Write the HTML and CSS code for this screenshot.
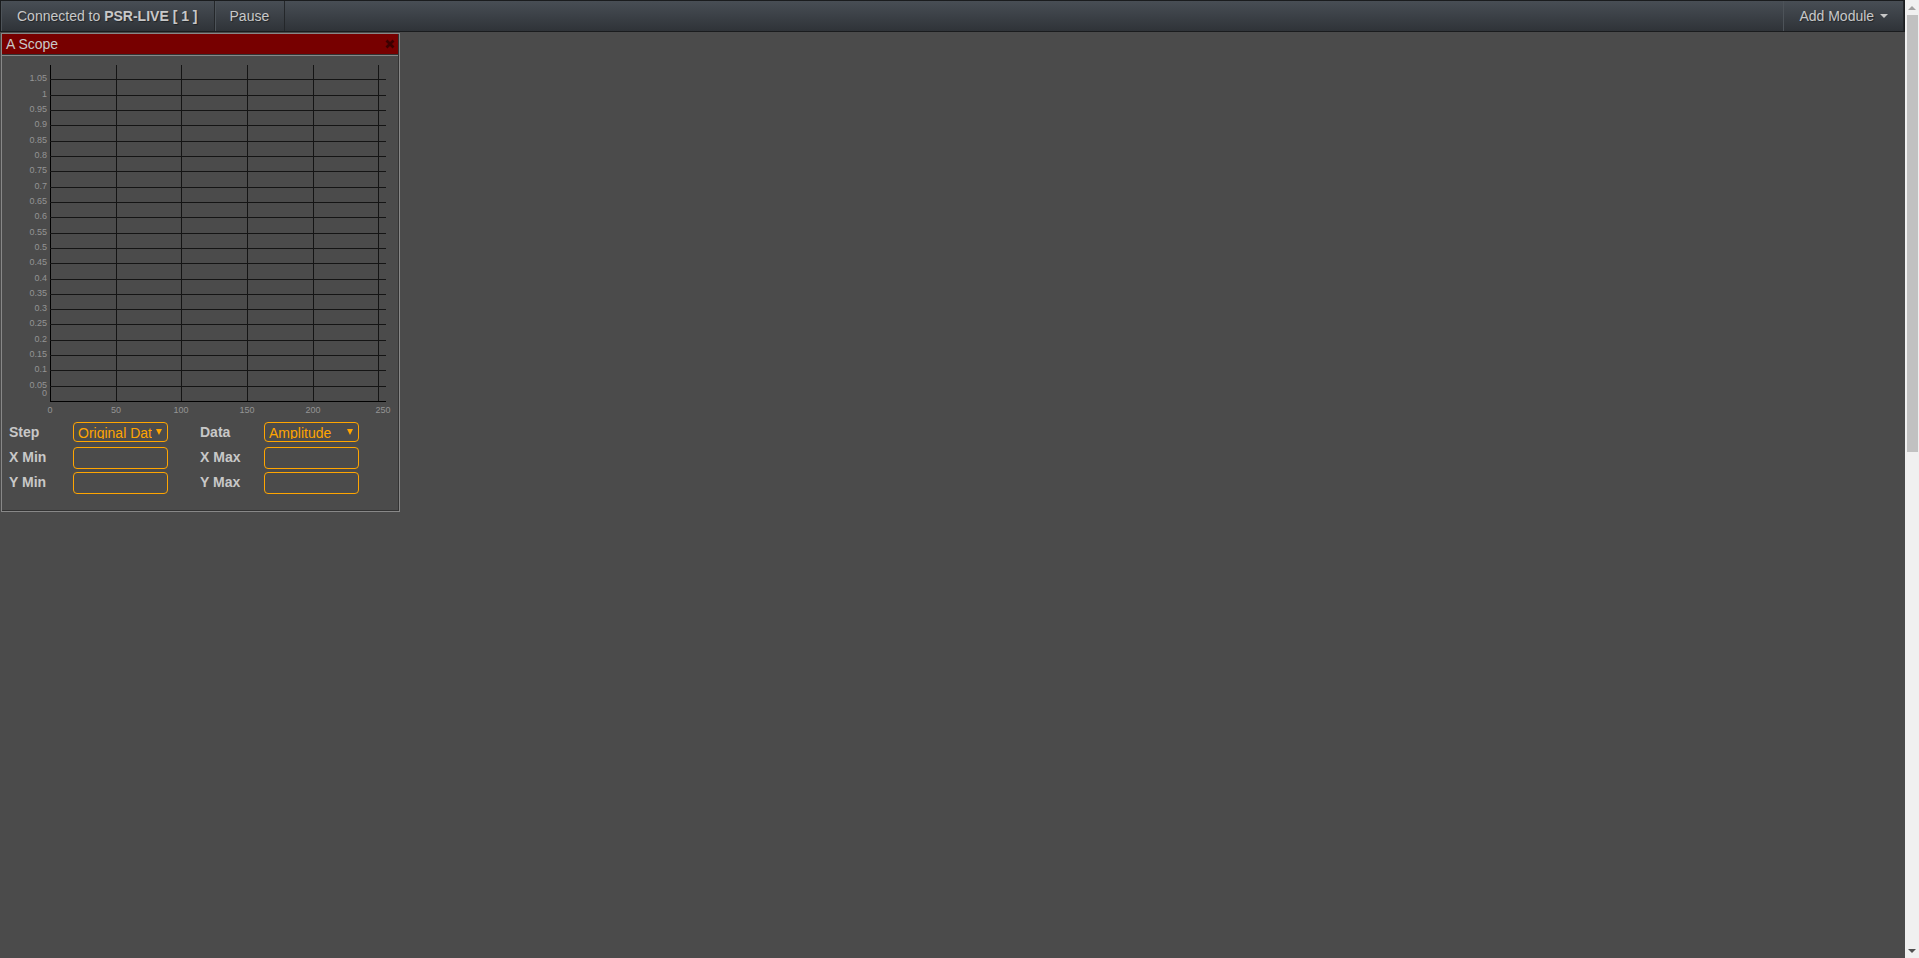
FILE: index.html
```html
<!DOCTYPE html>
<html lang="en">
<head>
  <meta charset="UTF-8">
  <meta name="viewport" content="width=device-width, initial-scale=1.0">
  <title>PSR-LIVE</title>
  <link rel="stylesheet" href="styles.css">
</head>
<body>
  <div class="page">
    <nav class="navbar">
      <a class="nav-item brand" href="#">Connected to <b>PSR-LIVE [ 1 ]</b></a>
      <button class="nav-item" id="pause" type="button">Pause</button>
      <button class="nav-item nav-right" type="button">Add Module <span class="caret"></span></button>
    </nav>

    <main class="modules">
      <section class="module">
        <header class="module-title">
          <h2>A Scope</h2>
          <button class="close" type="button" aria-label="Close">
            <svg width="10" height="10" viewBox="0 0 10 10"><path d="M1.5 1.5 L8.5 8.5 M8.5 1.5 L1.5 8.5" stroke="#3c0000" stroke-width="2.8"/></svg>
          </button>
        </header>
        <svg class="plot" id="plot" width="396" height="364" viewBox="0 0 396 364" shape-rendering="crispEdges"></svg>
        <form class="settings">
          <label for="step">Step</label>
          <div class="select"><select id="step"><option>Original Data</option></select></div>
          <label for="data">Data</label>
          <div class="select"><select id="data"><option>Amplitude</option></select></div>
          <label for="xmin">X Min</label>
          <input type="text" id="xmin">
          <label for="xmax">X Max</label>
          <input type="text" id="xmax">
          <label for="ymin">Y Min</label>
          <input type="text" id="ymin">
          <label for="ymax">Y Max</label>
          <input type="text" id="ymax">
        </form>
      </section>
    </main>
  </div>

  <div class="scrollbar" aria-hidden="true">
    <span class="arrow up"></span>
    <div class="track"><div class="thumb"></div></div>
    <span class="arrow down"></span>
  </div>

  <script>
    const plot = document.getElementById('plot');
    const left = 48, top_ = 9, right = 383, bottom = 345;
    const xMax = 255, yMax = 1.0973;

    function add(name, attrs, text) {
      const el = document.createElementNS('http://www.w3.org/2000/svg', name);
      for (const key in attrs) el.setAttribute(key, attrs[key]);
      if (text !== undefined) el.textContent = text;
      plot.appendChild(el);
    }

    // vertical grid lines and x labels
    for (let x = 0; x <= 250; x += 50) {
      const px = left + Math.round(x / xMax * (right - left));
      add('rect', { class: x ? 'grid' : 'axis', x: px, y: top_, width: 1, height: bottom - top_ + 1 });
      add('text', { class: 'tick', x: x === 250 ? px + 5 : px, y: bottom + 12, 'text-anchor': 'middle' }, x);
    }

    // horizontal grid lines and y labels
    for (let i = 0; i <= 21; i++) {
      const py = Math.round(bottom - i * 0.05 / yMax * (bottom - top_));
      add('rect', { class: i ? 'grid' : 'axis', x: left, y: py, width: right - left + 1, height: 1 });
      add('text', { class: 'tick', x: left - 3, y: i ? py + 2 : py - 5, 'text-anchor': 'end' }, +(i * 0.05).toFixed(2));
    }
  </script>
</body>
</html>
```
FILE: styles.css
```css
* { box-sizing: border-box; }
body { margin: 0; display: flex; min-height: 100vh; background: #4b4b4b; color: #c8c8c8; font: 14px/20px "Liberation Sans", Arial, sans-serif; }
.page { flex: 1; min-width: 0; }

.navbar { display: flex; height: 32px; border: 1px solid #1a1c1e; background: linear-gradient(#484e55, #2f3338); }
.nav-item { display: flex; align-items: center; padding: 0 15px 0 14px; border: 0; border-left: 1px solid #4d5359; border-right: 1px solid #24272a; background: none; color: #c8c8c8; font: inherit; text-decoration: none; text-shadow: 1px 1px 1px rgba(0,0,0,0.4); white-space: pre; }
.brand { padding: 0 16px 0 15px; }
.nav-right { margin-left: auto; padding-left: 15px; }
.caret { margin-left: 2px; border: 4px solid transparent; border-top-color: #c8c8c8; border-bottom: 0; }

.modules { padding: 1px; }
.module { width: 399px; max-width: 100%; border: 1px solid #888; box-shadow: inset -1px -1px #333; }
.module-title { display: flex; align-items: center; justify-content: space-between; height: 22px; margin-right: 1px; padding: 0 3px 2px 4px; background: #770000; border-bottom: 1px solid #888; box-shadow: inset 0 -1px #333; }
.module-title h2 { margin: 0; font-size: 14px; line-height: 20px; font-weight: normal; }
.close { display: flex; padding: 0; border: 0; background: none; }

.plot { display: block; max-width: 100%; }
.grid { fill: #141414; }
.axis { fill: #000; }
.tick { fill: #949494; font: 9px "Liberation Sans", Arial, sans-serif; }

.settings { display: grid; grid-template-columns: 64px 95px 32px 64px 95px; padding: 2px 7px 17px; row-gap: 3px; }
.settings label { height: 22px; font-weight: bold; }
.settings label:nth-of-type(even) { grid-column: 4; }
.settings select, .settings input { width: 95px; height: 22px; margin: 0; padding: 0 4px; border: 1px solid #ffa500; border-radius: 4px; background: none; color: #ffa500; font: inherit; }
.settings select { height: 20px; appearance: none; padding: 0 15px 2px 4px; }
.select { position: relative; }
.select::after { content: ""; position: absolute; top: 7px; right: 6px; border: 3px solid transparent; border-top: 6px solid #ffa500; border-bottom: 0; pointer-events: none; }

.scrollbar { display: flex; flex-direction: column; align-items: center; width: 14px; height: 100vh; padding: 6px 0 5px; background: #f0f0f0; }
.arrow { border: 4px solid transparent; }
.up { border-top: 0; border-bottom-color: #a0a0a0; }
.down { border-bottom: 0; border-top-color: #505050; }
.track { flex: 1; width: 11px; padding: 5px 0; }
.thumb { height: 47%; background: #c1c1c1; }
```
